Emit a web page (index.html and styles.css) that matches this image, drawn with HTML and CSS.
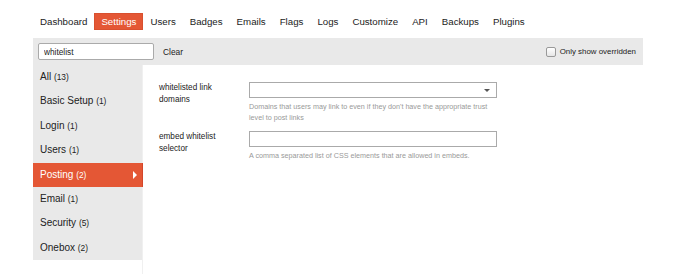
FILE: index.html
```html
<!DOCTYPE html>
<html lang="en">
  <head>
    <meta charset="UTF-8" />
    <title>Admin - Settings</title>
    <link rel="stylesheet" href="styles.css">
  </head>
  <body>
    <div class="admin">
      <nav class="tabs">
        <a href="#">Dashboard</a>
        <a href="#" class="active">Settings</a>
        <a href="#">Users</a>
        <a href="#">Badges</a>
        <a href="#">Emails</a>
        <a href="#">Flags</a>
        <a href="#">Logs</a>
        <a href="#">Customize</a>
        <a href="#">API</a>
        <a href="#">Backups</a>
        <a href="#">Plugins</a>
      </nav>

      <div class="controls">
        <input type="text" class="filter" value="whitelist" />
        <button class="clear">Clear</button>
        <label class="overridden">
          <span class="box"></span>
          Only show overridden
        </label>
      </div>

      <div class="body">
        <ul class="categories">
          <li>All <small>(13)</small></li>
          <li>Basic Setup <small>(1)</small></li>
          <li>Login <small>(1)</small></li>
          <li>Users <small>(1)</small></li>
          <li class="active">Posting <small>(2)</small><span class="arrow"></span></li>
          <li>Email <small>(1)</small></li>
          <li>Security <small>(5)</small></li>
          <li>Onebox <small>(2)</small></li>
        </ul>

        <section class="settings">
          <div class="row">
            <h3>whitelisted link domains</h3>
            <div class="value">
              <div class="select"><span class="caret"></span></div>
              <p class="desc">Domains that users may link to even if they don't have the appropriate trust level to post links</p>
            </div>
          </div>
          <div class="row">
            <h3>embed whitelist selector</h3>
            <div class="value">
              <div class="input"></div>
              <p class="desc">A comma separated list of CSS elements that are allowed in embeds.</p>
            </div>
          </div>
        </section>
      </div>
    </div>
  </body>
</html>
```

FILE: styles.css
```css
html,
body {
  margin: 0;
  padding: 0;
  background: #fff;
  font-family: "Liberation Sans", Arial, sans-serif;
  color: #222;
}

.admin {
  width: 610px;
  margin-left: 33px;
  padding-top: 13px;
}

.tabs {
  display: flex;
  height: 17px;
  margin-bottom: 8px;
}

.tabs a {
  display: block;
  padding: 0 7px;
  font-size: 9.7px;
  line-height: 17px;
  color: #222;
  text-decoration: none;
}

.tabs a.active {
  background: #e45735;
  color: #fff;
  box-shadow: inset 0 0 0 1px #d9502f;
}

.controls {
  display: flex;
  align-items: center;
  height: 27px;
  padding: 0 7px 0 5px;
  background: #e9e9e9;
}

.filter {
  box-sizing: border-box;
  width: 116px;
  height: 17px;
  margin: 0;
  padding: 0 5px;
  border: 1px solid #aaa;
  border-radius: 2px;
  font-family: inherit;
  font-size: 8.3px;
  color: #222;
}

.clear {
  margin-left: 4px;
  padding: 0 5px;
  border: 0;
  background: none;
  font-family: inherit;
  font-size: 8.4px;
  color: #222;
}

.overridden {
  display: flex;
  align-items: center;
  gap: 4px;
  margin-left: auto;
  font-size: 7.9px;
  color: #222;
}

.overridden .box {
  box-sizing: border-box;
  width: 10px;
  height: 10px;
  border: 1px solid #999;
  border-radius: 2px;
  background: linear-gradient(#fff, #e6e6e6);
}

.body {
  display: flex;
  align-items: flex-start;
}

.categories {
  width: 110px;
  margin: 0;
  padding: 0;
  list-style: none;
  background: #e9e9e9;
}

.categories li {
  position: relative;
  box-sizing: border-box;
  height: 24.4px;
  padding-left: 7px;
  font-size: 10px;
  line-height: 24.4px;
}

.categories small {
  font-size: 8.4px;
}

.categories li.active {
  background: #e45735;
  color: #fff;
  box-shadow: inset -1px 0 0 #d4462a;
}

.arrow {
  position: absolute;
  right: 6px;
  top: 8px;
  width: 0;
  height: 0;
  border-top: 4px solid transparent;
  border-bottom: 4px solid transparent;
  border-left: 4px solid #fff;
}

.settings {
  flex: 1;
  min-height: 192px;
  padding: 17px 0 0 16px;
  border-left: 1px solid #f0f0f0;
  margin-left: -1px;
}

.row {
  display: flex;
  margin-bottom: 8px;
}

.row h3 {
  width: 75px;
  margin: 0 15px 0 0;
  font-size: 8.2px;
  font-weight: normal;
  line-height: 12px;
  color: #222;
}

.value {
  width: 248px;
}

.select,
.input {
  position: relative;
  box-sizing: border-box;
  height: 16px;
  border: 1px solid #aaa;
  background: #fff;
}

.caret {
  position: absolute;
  right: 6px;
  top: 6px;
  width: 0;
  height: 0;
  border-left: 3px solid transparent;
  border-right: 3px solid transparent;
  border-top: 3px solid #555;
}

.desc {
  margin: 3px 0 0;
  font-size: 7.2px;
  line-height: 11px;
  color: #999;
}
```
